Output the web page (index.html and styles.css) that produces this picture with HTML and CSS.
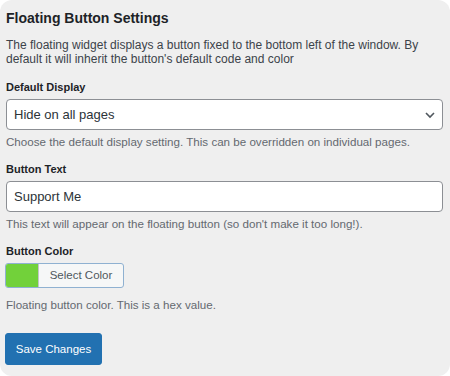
FILE: index.html
```html
<!DOCTYPE html>
<html lang="en">
<head>
  <meta charset="UTF-8">
  <meta name="viewport" content="width=device-width, initial-scale=1.0">
  <title>Floating Button Settings</title>
  <link rel="stylesheet" href="styles.css">
</head>
<body>
  <div class="panel">
    <h2 class="title">Floating Button Settings</h2>
    <p class="intro">The floating widget displays a button fixed to the bottom left of the window. By default it will inherit the button's default code and color</p>

    <!-- Default display -->
    <div class="field">
      <label class="label" for="display">Default Display</label>
      <div class="select-wrap">
        <select id="display" class="control select">
          <option>Hide on all pages</option>
          <option>Show on all pages</option>
        </select>
        <svg class="chevron" width="12" height="8" viewBox="0 0 12 8"><path d="M2 2l4 4 4-4" fill="none" stroke="#50575e" stroke-width="1.6"/></svg>
      </div>
      <p class="hint">Choose the default display setting. This can be overridden on individual pages.</p>
    </div>

    <!-- Button text -->
    <div class="field">
      <label class="label" for="btnText">Button Text</label>
      <input id="btnText" class="control" type="text" value="Support Me">
      <p class="hint">This text will appear on the floating button (so don't make it too long!).</p>
    </div>

    <!-- Button color -->
    <div class="field">
      <label class="label">Button Color</label>
      <button class="color-btn" type="button">
        <span class="swatch"></span>
        <span class="color-text">Select Color</span>
      </button>
      <p class="hint hint-wide">Floating button color. This is a hex value.</p>
    </div>

    <button class="save" type="button">Save Changes</button>
  </div>
</body>
</html>
```

FILE: styles.css
```css
html, body {
  margin: 0;
  background: #fff;
}
body {
  font-family: "Liberation Sans", Arial, sans-serif;
  color: #1d2327;
}
.panel {
  width: 450px;
  height: 376px;
  box-sizing: border-box;
  background: #efefef;
  border-radius: 12px;
  padding: 10px 7px 0 6px;
}
.title {
  font-size: 14px;
  font-weight: bold;
  margin: 0 0 11px;
  line-height: 17px;
}
.intro {
  font-size: 12px;
  line-height: 14px;
  color: #3c434a;
  margin: 0 0 15px;
}
.field {
  margin-bottom: 15px;
}
.label {
  display: block;
  font-size: 11px;
  font-weight: bold;
  line-height: 13px;
  margin-bottom: 5px;
}
.control {
  display: block;
  width: 100%;
  height: 31px;
  box-sizing: border-box;
  border: 1px solid #8c8f94;
  border-radius: 4px;
  background: #fff;
  font-family: inherit;
  font-size: 13px;
  color: #2c3338;
  padding: 0 7px;
  margin: 0;
}
.select-wrap {
  position: relative;
}
.select {
  appearance: none;
  -webkit-appearance: none;
}
.chevron {
  position: absolute;
  right: 7px;
  top: 12px;
}
.hint {
  font-size: 11.6px;
  line-height: 13px;
  color: #646970;
  margin: 5px 0 0;
}
.hint-wide {
  margin-top: 10px;
}
.color-btn {
  display: flex;
  width: 119px;
  height: 25px;
  padding: 0;
  border: 1px solid #8fb1d1;
  border-radius: 3px;
  background: #f6f7f7;
  overflow: hidden;
  font-family: inherit;
  margin-left: -1px;
}
.swatch {
  width: 32px;
  height: 100%;
  background: #72d13a;
  border-right: 1px solid #c3c4c7;
}
.color-text {
  flex: 1;
  font-size: 11.5px;
  line-height: 23px;
  color: #50575e;
  text-align: center;
}
.save {
  margin-top: 7px;
  margin-left: -1px;
  width: 97px;
  height: 32px;
  background: #2271b1;
  border: 1px solid #2271b1;
  border-radius: 3px;
  color: #fff;
  font-family: inherit;
  font-size: 11.5px;
  padding: 0;
}
```
